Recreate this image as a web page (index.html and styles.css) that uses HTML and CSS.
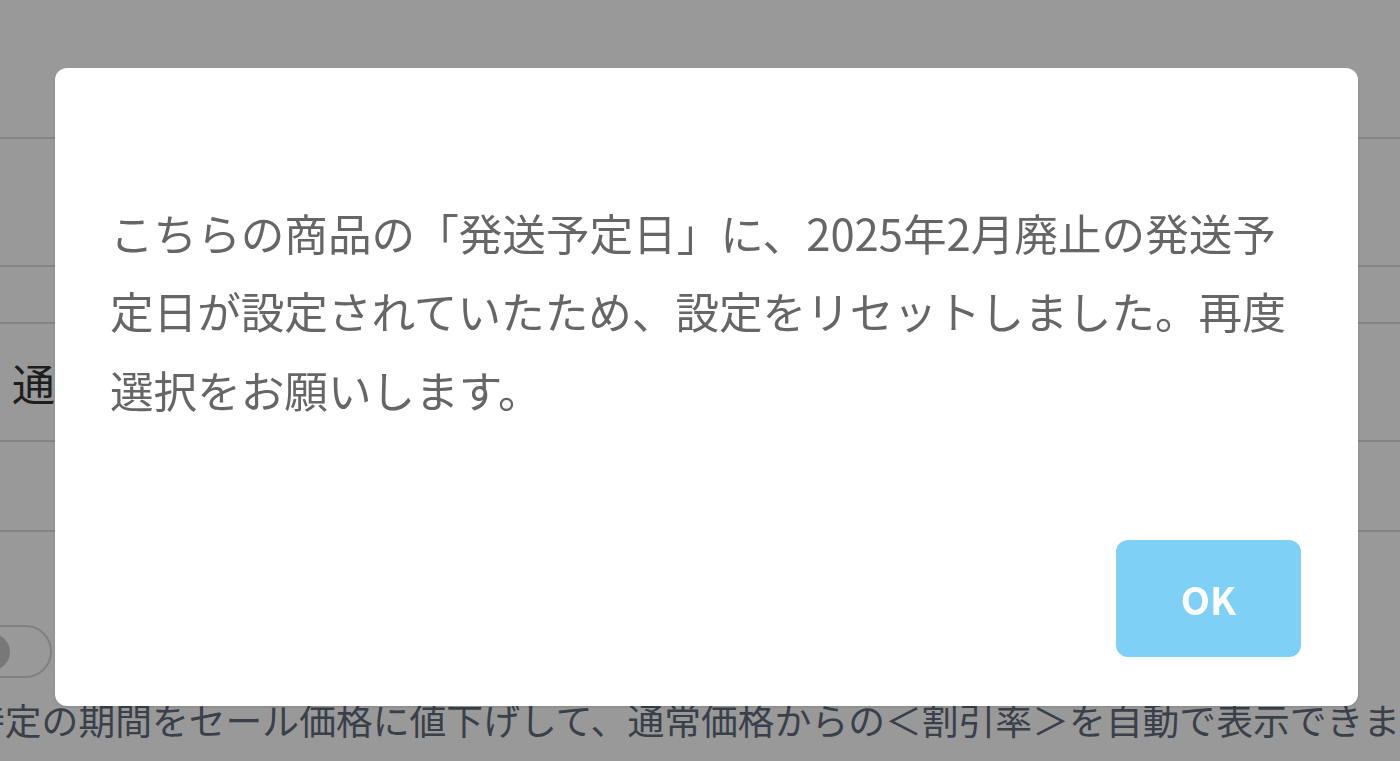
FILE: index.html
```html
<!DOCTYPE html>
<html lang="ja">
<head>
<meta charset="utf-8">
<title>発送予定日</title>
<link rel="stylesheet" href="styles.css">
</head>
<body>
<div class="page">
  <div class="row row-head"></div>
  <div class="row row-a"></div>
  <div class="row row-b"></div>
  <div class="row row-c"><span class="label">通常価格</span></div>
  <div class="row row-d"></div>
  <div class="sale">
    <div class="toggle"><span class="knob"></span></div>
    <p class="note">特定の期間をセール価格に値下げして、通常価格からの＜割引率＞を自動で表示できます。</p>
  </div>
</div>
<div class="overlay">
  <div class="modal">
    <p class="message">こちらの商品の「発送予定日」に、2025年2月廃止の発送予定日が設定されていたため、設定をリセットしました。再度選択をお願いします。</p>
    <div class="actions"><button class="ok" type="button">OK</button></div>
  </div>
</div>
</body>
</html>
```

FILE: styles.css
```css
html, body {
  margin: 0;
  padding: 0;
  background: #ffffff;
  overflow: hidden;
}
body {
  font-family: "Noto Sans CJK JP", "Noto Sans", sans-serif;
  width: 1400px;
  height: 761px;
}
.page {
  width: 1400px;
  height: 761px;
  overflow: hidden;
}
.row {
  border-bottom: 2px solid #dddddd;
  box-sizing: border-box;
}
.row-head { height: 139px; }
.row-a { height: 128px; }
.row-b { height: 57px; }
.row-c {
  height: 118px;
  display: flex;
  align-items: center;
  padding-left: 12px;
}
.label {
  font-size: 43px;
  color: #333333;
  white-space: nowrap;
}
.row-d { height: 90px; }
.sale {
  padding-top: 93px;
}
.toggle {
  width: 110px;
  height: 53px;
  margin-left: -58px;
  border: 2px solid #d6d6d6;
  border-radius: 30px;
  box-sizing: border-box;
  display: flex;
  align-items: center;
  padding-left: 30px;
}
.knob {
  width: 36px;
  height: 36px;
  border-radius: 50%;
  background: #c8c8c8;
}
.note {
  margin: 16px 0 0 -32px;
  font-size: 36.8px;
  line-height: 50px;
  color: #5f6b7c;
  white-space: nowrap;
}
.overlay {
  position: fixed;
  inset: 0;
  background: rgba(0, 0, 0, 0.4);
  padding: 68px 0 0 55px;
}
.modal {
  width: 1303px;
  height: 638px;
  box-sizing: border-box;
  background: #ffffff;
  border-radius: 12px;
  padding: 125px 57px 49px 55px;
  display: flex;
  flex-direction: column;
  box-shadow: 0 1px 3px rgba(0, 0, 0, 0.12);
}
.message {
  margin: 0;
  font-size: 43.6px;
  line-height: 78.4px;
  color: #666666;
}
.actions {
  margin-top: auto;
  display: flex;
  justify-content: flex-end;
}
.ok {
  width: 185px;
  height: 117px;
  border: none;
  border-radius: 12px;
  background: #7fd0f7;
  color: #ffffff;
  font-family: "Noto Sans CJK JP", "Noto Sans", sans-serif;
  font-weight: 700;
  font-size: 38px;
  padding: 0;
}
```
